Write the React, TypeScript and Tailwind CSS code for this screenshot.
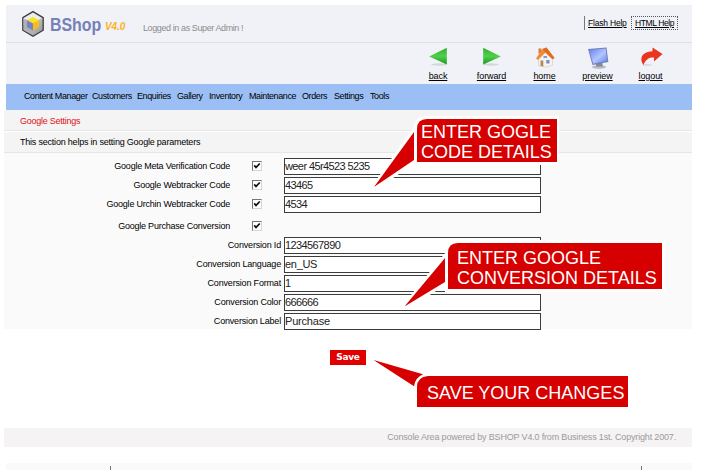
import React from 'react';

const sans = "font-['Liberation_Sans',Arial,sans-serif]";

function Logo() {
  return (
    <svg width="24" height="28" viewBox="0 0 24 28">
      <defs>
        <linearGradient id="shell" x1="0" y1="0" x2="1" y2="1">
          <stop offset="0" stopColor="#fafafa" />
          <stop offset="1" stopColor="#8d8d8d" />
        </linearGradient>
      </defs>
      <path d="M12 1.600 22.200 7.600v12.600L12 26.200 1.800 20.200V7.600z" fill="url(#shell)" stroke="#3d3d40" strokeWidth="1.300" />
      <path d="M3 8.300 12 3l9 5.300L12 12z" fill="#ededee" />
      <path d="M3 9v10.500L12 24.500V20L6 16.500V10z" fill="#b0b1b5" />
      <path d="M12 7 18 10.200 12 13.400 6 10.200z" fill="#f6e61c" />
      <path d="M6 10.200 12 13.400V20.500L6 17z" fill="#7482c8" />
      <path d="M18 10.200 12 13.400V20.500L18 17z" fill="#fbb91b" />
    </svg>
  );
}

function BackIcon() {
  return (
    <svg width="24" height="22" viewBox="0 0 24 22">
      <defs>
        <linearGradient id="gl" x1="0" y1="0" x2="0" y2="1">
          <stop offset="0" stopColor="#2fae2f" />
          <stop offset=".5" stopColor="#52cf4c" />
          <stop offset="1" stopColor="#159a1c" />
        </linearGradient>
      </defs>
      <ellipse cx="13" cy="18.500" rx="8" ry="1.200" fill="#d3d8d5" />
      <path d="M20.800 1.800v16.700L3.200 10.500z" fill="url(#gl)" />
    </svg>
  );
}

function ForwardIcon() {
  return (
    <svg width="24" height="22" viewBox="0 0 24 22">
      <ellipse cx="11" cy="18.500" rx="8" ry="1.200" fill="#d3d8d5" />
      <path d="M3.200 1.800v16.700L20.800 10.500z" fill="url(#gl)" />
    </svg>
  );
}

function HomeIcon() {
  return (
    <svg width="24" height="22" viewBox="0 0 24 22">
      <path d="M5.500 10v9.800l7.500 1.400 6.500-2V10l-5-5z" fill="#f6f2ec" stroke="#c9bfb4" strokeWidth=".5" />
      <path d="M5.500 2.500h3v5h-3z" fill="#e07a30" />
      <path d="M3 12.500 9.500 3l4-1.500L21.500 12l-2 1.200-7-6.700L5 14z" fill="#f08c38" />
      <path d="M9.500 3l4-1.500L21.500 12l-2 1.200-7-6.700z" fill="#de6d22" />
      <path d="M7.500 14.500h2.800v6l-2.800-.6z" fill="#b08a60" />
      <path d="M13.300 14h3.200v3.500h-3.200z" fill="#7590cf" />
      <path d="M10.500 10h3.500v2h-3.500z" fill="#8298cf" />
    </svg>
  );
}

function PreviewIcon() {
  return (
    <svg width="24" height="24" viewBox="0 0 24 24">
      <defs>
        <linearGradient id="screen" x1="0" y1="0" x2="1" y2="1">
          <stop offset="0" stopColor="#5d80ec" />
          <stop offset=".55" stopColor="#b4c5ff" />
          <stop offset="1" stopColor="#5b7ce8" />
        </linearGradient>
      </defs>
      <ellipse cx="13" cy="21" rx="7" ry="1.800" fill="#b9bcc4" />
      <path d="M10 16h6l1 4.500h-7z" fill="#85899a" />
      <path d="M2 3 20.500 1.500 22.300 16 6.500 19z" fill="#6f7fb8" />
      <path d="M3 4 19.600 2.400 21.200 15 7.200 17.700z" fill="url(#screen)" />
    </svg>
  );
}

function LogoutIcon() {
  return (
    <svg width="24" height="22" viewBox="0 0 24 22">
      <ellipse cx="8" cy="19" rx="5" ry="1" fill="#dcdce0" />
      <path d="M13.500 1.500 23.500 8 15 15.500v-4C10 11 6.500 13.500 4.500 19-.5 12 3.500 5.500 13.500 5.200z" fill="#e93420" />
    </svg>
  );
}

const tools = [
  { label: 'back', icon: <BackIcon />, width: 'w-[54px]' },
  { label: 'forward', icon: <ForwardIcon />, width: 'w-[53px]' },
  { label: 'home', icon: <HomeIcon />, width: 'w-[53px]' },
  { label: 'preview', icon: <PreviewIcon />, width: 'w-[53px]' },
  { label: 'logout', icon: <LogoutIcon />, width: 'w-[53px]' },
];

const menu = [
  { label: 'Content Manager', width: 'w-[68px]' },
  { label: 'Customers', width: 'w-[45px]' },
  { label: 'Enquiries', width: 'w-[40px]' },
  { label: 'Gallery', width: 'w-[32px]' },
  { label: 'Inventory', width: 'w-[40px]' },
  { label: 'Maintenance', width: 'w-[53px]' },
  { label: 'Orders', width: 'w-[32px]' },
  { label: 'Settings', width: 'w-[36px]' },
  { label: 'Tools', width: 'w-[24px]' },
];

function Check() {
  return (
    <span className="flex h-[10px] w-[10px] items-center justify-center border border-[#77756f] border-r-[#d8d5cd] border-b-[#d8d5cd] bg-white">
      <svg width="8" height="8" viewBox="0 0 8 8">
        <path d="M1.200 3.400 3 5.400 6.800 1.500" fill="none" stroke="#111" strokeWidth="1.700" />
      </svg>
    </span>
  );
}

function Field({ value, tracking = 'tracking-[-0.6px]' }: { value: string; tracking?: string }) {
  return (
    <div className={`flex h-[17px] w-[257px] items-center border border-[#3c3c3c] bg-white text-[11px] leading-none text-[#222] ${tracking}`}>
      {value}
    </div>
  );
}

function CodeRow({ label, value }: { label: string; value?: string }) {
  return (
    <div className="flex h-[19px] items-start">
      <div className="w-[226px] text-right leading-[16px] tracking-[-0.22px]">{label}</div>
      <div className="ml-[22px] w-[32px] pt-[3px]"><Check /></div>
      {value && <Field value={value} />}
    </div>
  );
}

function ConversionRow({ label, value, tracking }: { label: string; value: string; tracking?: string }) {
  return (
    <div className="flex h-[19px] items-start">
      <div className="w-[280px] pr-[3px] text-right leading-[16px] tracking-[-0.18px]">{label}</div>
      <Field value={value} tracking={tracking} />
    </div>
  );
}

export default function App() {
  return (
    <div className={`relative h-[470px] w-[702px] overflow-hidden bg-white text-[9px] text-black ${sans}`}>
      <header className="mt-[5px] ml-[6px] flex h-[38px] w-[686px] items-start border-b border-[#dfe0e4] bg-[#f1f2f7]">
        <div className="ml-[15px] mt-[5px]"><Logo /></div>
        <div className="ml-[5px] mt-[10px] w-[55px]">
          <div className="w-fit origin-left scale-x-[0.91] text-[17.500px] font-bold leading-[20px] text-[#7580b9]">BShop</div>
        </div>
        <div className="mt-[15px] w-[38px] text-[10px] font-bold italic leading-[14px] tracking-[-0.1px] text-[#fbb31e]">V4.0</div>
        <div className="mt-[17px] whitespace-nowrap leading-[12px] tracking-[-0.4px] text-[#8c8c90]">Logged in as Super Admin !</div>
        <div className="mr-[14px] ml-auto mt-[11px] flex text-[8.500px] leading-[14px] tracking-[-0.2px] whitespace-nowrap">
          <a className="w-[47px] border-l border-[#77777c] pl-[3px] underline">Flash Help</a>
          <a className="w-[47px] border border-dotted border-[#555] pl-[3px] leading-[12px] tracking-[-0.4px] underline">HTML Help</a>
        </div>
      </header>
      <div className="ml-[6px] flex h-[41px] w-[686px] justify-end bg-[#f1f2f7] pr-[15px]">
        {tools.map((t) => (
          <a key={t.label} className={`flex flex-col items-center ${t.width}`}>
            <span className="mt-[3px] flex h-[24px] items-start">{t.icon}</span>
            <span className="leading-[12px] tracking-[-0.1px] underline">{t.label}</span>
          </a>
        ))}
      </div>
      <nav className="ml-[6px] flex h-[26px] w-[686px] items-center bg-[#9bbff4] pl-[18px] tracking-[-0.4px] whitespace-nowrap">
        {menu.map((m) => (
          <a key={m.label} className={m.width}>{m.label}</a>
        ))}
      </nav>
      <main className="ml-[4px] w-[688px]">
        <h1 className="h-[21px] border-b border-[#e6e6e6] bg-[#f4f4f4] pl-[16px] leading-[22px] tracking-[-0.25px] text-[#e01020]">Google Settings</h1>
        <p className="mt-px h-[21px] border-b border-[#e6e6e6] bg-[#f4f4f4] pl-[16px] leading-[21px] tracking-[-0.21px]">This section helps in setting Google parameters</p>
        <form className="h-[176px] bg-[#fafafa] pt-[5px]">
          <CodeRow label="Google Meta Verification Code" value="weer 45r4523 5235" />
          <CodeRow label="Google Webtracker Code" value="43465" />
          <CodeRow label="Google Urchin Webtracker Code" value="4534" />
          <div className="mt-[3px] h-[19px]"><CodeRow label="Google Purchase Conversion" /></div>
          <ConversionRow label="Conversion Id" value="1234567890" />
          <ConversionRow label="Conversion Language" value="en_US" tracking="tracking-[-0.3px]" />
          <ConversionRow label="Conversion Format" value="1" />
          <ConversionRow label="Conversion Color" value="666666" />
          <ConversionRow label="Conversion Label" value="Purchase" tracking="tracking-[-0.2px]" />
        </form>
        <button className="mt-[21px] ml-[326px] block h-[15px] w-[36px] bg-[#e00000] font-['DejaVu_Sans',Verdana,sans-serif] text-[9px] leading-[15px] font-bold tracking-[-0.3px] text-white">Save</button>
      </main>
      <footer className="mt-[63px] ml-[4px] h-[19px] w-[688px] bg-[#f5f3f4] pr-[16px] text-right leading-[19px] tracking-[-0.17px] text-[#9c9a9b]">
        Console Area powered by BSHOP V4.0 from Business 1st. Copyright 2007.
      </footer>
      <div className="mt-[16px] ml-[6px] flex h-[7px] w-[686px] justify-between bg-[#fafafa] pt-[3px] pr-[50px] pl-[104px]">
        <span className="w-px bg-[#777]" />
        <span className="w-px bg-[#777]" />
      </div>

      <svg className="pointer-events-none absolute inset-0" width="702" height="470">
        <g stroke="#fff" strokeWidth="6" fill="#fff">
          <path d="M375 187 414 132v28zM556 119H427q-10 0-10 10v33h139z" />
          <path d="M406 306 445 258v24zM662 243H458q-10 0-10 10v36h214z" />
        </g>
        <g fill="#d60000">
          <path d="M374 187 414 132v28z" />
          <path d="M557 119H427q-10 0-10 10v33h140z" />
          <path d="M404.500 306.500 445 258v24z" />
          <path d="M662 243H458q-10 0-10 10v36h214z" />
          <path d="M373.500 360 423 374.200q-8 3.500-9 12z" />
          <path d="M628 376H428q-11 1-11 11v20h211z" />
        </g>
      </svg>
      <div className="absolute top-[122px] left-[421px] text-[18px] leading-[20px] whitespace-nowrap text-white">ENTER GOGLE<br />CODE DETAILS</div>
      <div className="absolute top-[248px] left-[457px] text-[18px] leading-[20px] whitespace-nowrap text-white">ENTER GOOGLE<br />CONVERSION DETAILS</div>
      <div className="absolute top-[383px] left-[427px] text-[18px] leading-[20px] whitespace-nowrap text-white">SAVE YOUR CHANGES</div>
    </div>
  );
}
